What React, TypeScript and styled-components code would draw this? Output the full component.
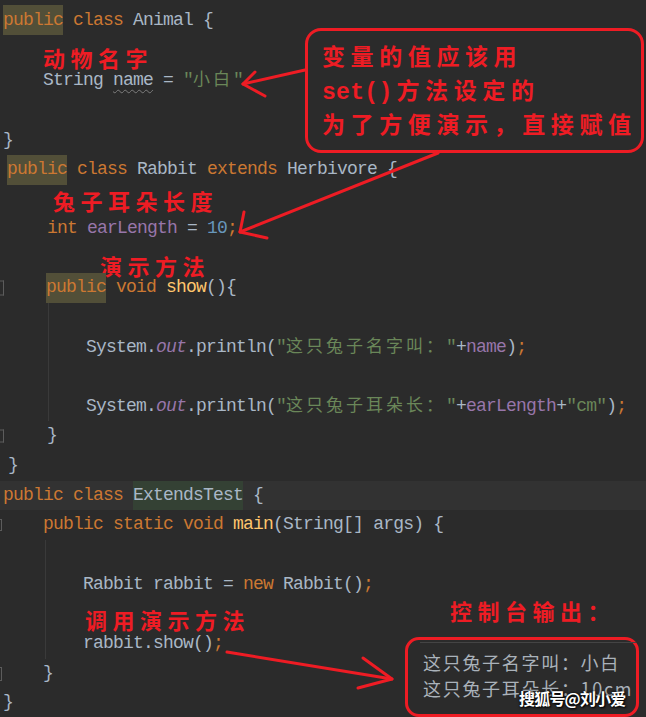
import React from "react";
import styled, { createGlobalStyle, css } from "styled-components";

const Global = createGlobalStyle`
  html, body { margin: 0; padding: 0; background: #2b2b2b; }
  body { width: 646px; height: 717px; overflow: hidden; }
`;

const RED = "#ee1c24";

const Page = styled.div`
  position: relative;
  width: 646px;
  height: 717px;
  overflow: hidden;
  box-sizing: border-box;
  padding-top: 5px;
  background: #2b2b2b;
  color: #a9b7c6;
  font-family: "Liberation Mono", "Noto Sans CJK SC", monospace;
  font-size: 18px;
  letter-spacing: -0.8px;
`;

const Section = styled.div<{ $base: number; $lh: number }>`
  --base: ${(p) => p.$base}px;
  --lh: ${(p) => p.$lh}px;
`;

const Line = styled.div<{ $pad?: number; $current?: boolean }>`
  position: relative;
  height: var(--lh);
  line-height: var(--lh);
  white-space: pre;
  padding-left: calc(var(--base) + ${(p) => p.$pad ?? 0}px);
  ${(p) =>
    p.$current &&
    css`
      background: #323232;
    `}
`;

const Body = styled.div<{ $guide: number }>`
  --base: 37px;
  margin-left: ${(p) => p.$guide}px;
  border-left: 1px solid #3a3a3a;
`;

const Kw = styled.span`
  color: #cc7832;
`;
const Fld = styled.span<{ $italic?: boolean }>`
  color: #9876aa;
  font-style: ${(p) => (p.$italic ? "italic" : "normal")};
`;
const Str = styled.span`
  color: #6a8759;
`;
const Num = styled.span`
  color: #6897bb;
`;
const Fn = styled.span`
  color: #ffc66d;
`;
const Typo = styled.span`
  text-decoration: underline wavy #7d7d7d;
  text-decoration-thickness: 1px;
  text-underline-offset: 4px;
`;
const Hl = styled.span<{ $green?: boolean }>`
  display: inline-block;
  vertical-align: top;
  height: var(--lh);
  line-height: var(--lh);
  background: ${(p) => (p.$green ? "#344134" : "#524f38")};
`;
const Cjk = styled.span`
  font-family: "Noto Sans CJK SC", sans-serif;
  font-size: 17px;
  letter-spacing: 3px;
  line-height: 1;
`;

const Note = styled.span<{ $dy?: number; $ml?: number }>`
  display: inline-block;
  vertical-align: top;
  line-height: var(--lh);
  font-family: "Noto Sans CJK SC", sans-serif;
  font-weight: 700;
  font-size: 22px;
  letter-spacing: 5.5px;
  color: ${RED};
  transform: translateY(${(p) => p.$dy ?? 0}px);
  margin-left: ${(p) => p.$ml ?? 0}px;
`;

const FoldMark = styled.span<{ $h: number; $w: number }>`
  position: absolute;
  left: 0;
  top: 50%;
  width: ${(p) => p.$w}px;
  height: ${(p) => p.$h}px;
  transform: translateY(-50%);
  box-sizing: border-box;
  border: 1px solid #5c5c5c;
  border-left: none;
`;

const Callout = styled.div`
  position: absolute;
  left: 305px;
  top: 28px;
  width: 339px;
  height: 125px;
  box-sizing: border-box;
  border: 3px solid ${RED};
  border-radius: 16px;
  padding: 7px 0 0 14px;
  color: ${RED};
  font-family: "Noto Sans CJK SC", sans-serif;
  font-weight: 700;
  font-size: 23px;
  letter-spacing: 5.6px;
`;

const CalloutLine = styled.div`
  height: 34px;
  line-height: 34px;
  white-space: pre;
`;

const Latin = styled.span`
  font-family: "Liberation Mono", monospace;
  font-weight: 700;
  font-size: 23px;
  letter-spacing: 0.3px;
  margin-right: 4px;
`;

const Console = styled.div`
  position: absolute;
  left: 405px;
  top: 637px;
  width: 234px;
  height: 80px;
  box-sizing: border-box;
  border: 3px solid ${RED};
  border-radius: 14px;
  padding-top: 2px;
`;

const ConsoleRule = styled.div`
  height: 1px;
  margin-left: 12px;
  background: #444444;
`;

const ConsoleText = styled.div`
  padding: 6px 0 0 15px;
  font-family: "Noto Sans CJK SC", sans-serif;
  font-size: 18px;
  letter-spacing: 1.7px;
  color: #aab2ba;
`;

const ConsoleLine = styled.div`
  height: 26px;
  line-height: 26px;
  white-space: nowrap;
`;

const Watermark = styled.div`
  position: absolute;
  left: 519px;
  top: 686px;
  font-family: "Noto Sans CJK SC", sans-serif;
  font-weight: 700;
  font-size: 16px;
  color: #ffffff;
  text-shadow: 1px 1px 2px #000, 0 0 3px #000;
  white-space: nowrap;
`;

const Arrows = styled.svg`
  position: absolute;
  left: 0;
  top: 0;
  pointer-events: none;
`;

export default function App() {
  return (
    <Page>
      <Global />

      <Section $base={3} $lh={30}>
        <Line>
          <Hl>
            <Kw>public</Kw>
          </Hl>{" "}
          <Kw>class</Kw> Animal {"{"}
        </Line>
        <Line $pad={40}>
          <Note $dy={7}>动物名字</Note>
        </Line>
        <Line $pad={40}>
          String <Typo>name</Typo> ={" "}
          <Str>
            "<Cjk>小白</Cjk>"
          </Str>
        </Line>
        <Line />
        <Line>{"}"}</Line>
      </Section>

      <Section $base={7} $lh={29.6}>
        <Line>
          <Hl>
            <Kw>public</Kw>
          </Hl>{" "}
          <Kw>class</Kw> Rabbit <Kw>extends</Kw> Herbivore {"{"}
        </Line>
        <Line $pad={46}>
          <Note $dy={1}>兔子耳朵长度</Note>
        </Line>
        <Line $pad={40}>
          <Kw>int</Kw> <Fld>earLength</Fld> = <Num>10</Num>
          <Kw>;</Kw>
        </Line>
        <Line $pad={93}>
          <Note $dy={7}>演示方法</Note>
        </Line>
        <Line $pad={39}>
          <FoldMark $w={4} $h={15} />
          <Hl>
            <Kw>public</Kw>
          </Hl>{" "}
          <Kw>void</Kw> <Fn>show</Fn>(){"{"}
        </Line>
        <Body $guide={48}>
          <Line />
          <Line>
            System.<Fld $italic>out</Fld>.println(
            <Str>
              "<Cjk>这只兔子名字叫：</Cjk>"
            </Str>
            +<Fld>name</Fld>)<Kw>;</Kw>
          </Line>
          <Line />
          <Line>
            System.<Fld $italic>out</Fld>.println(
            <Str>
              "<Cjk>这只兔子耳朵长：</Cjk>"
            </Str>
            +<Fld>earLength</Fld>+<Str>"cm"</Str>)<Kw>;</Kw>
          </Line>
        </Body>
        <Line $pad={40}>
          <FoldMark $w={4} $h={13} />
          {"}"}
        </Line>
        <Line $pad={1}>{"}"}</Line>
      </Section>

      <Section $base={3} $lh={29.7}>
        <Line $current>
          <Kw>public</Kw> <Kw>class</Kw> <Hl $green>ExtendsTest</Hl> {"{"}
        </Line>
        <Line $pad={40}>
          <FoldMark $w={2} $h={12} />
          <Kw>public</Kw> <Kw>static</Kw> <Kw>void</Kw> <Fn>main</Fn>(String[]
          args) {"{"}
        </Line>
        <Body $guide={45}>
          <Line />
          <Line>
            Rabbit rabbit = <Kw>new</Kw> Rabbit()<Kw>;</Kw>
          </Line>
          <Line>
            <Note $dy={6} $ml={2}>
              调用演示方法
            </Note>
            <Note $dy={-3} $ml={200}>
              控制台输出：
            </Note>
          </Line>
          <Line>
            rabbit.show()<Kw>;</Kw>
          </Line>
        </Body>
        <Line $pad={40}>
          <FoldMark $w={2} $h={14} />
          {"}"}
        </Line>
        <Line>{"}"}</Line>
      </Section>

      <Callout>
        <CalloutLine>变量的值应该用</CalloutLine>
        <CalloutLine>
          <Latin>set()</Latin>方法设定的
        </CalloutLine>
        <CalloutLine>为了方便演示，直接赋值</CalloutLine>
      </Callout>

      <Console>
        <ConsoleRule />
        <ConsoleText>
          <ConsoleLine>这只兔子名字叫：小白</ConsoleLine>
          <ConsoleLine>这只兔子耳朵长：10cm</ConsoleLine>
        </ConsoleText>
      </Console>

      <Watermark>搜狐号@刘小爱</Watermark>

      <Arrows width={646} height={717} viewBox="0 0 646 717">
        <g
          stroke={RED}
          strokeWidth={3}
          fill="none"
          strokeLinecap="round"
          strokeLinejoin="round"
        >
          <polyline points="305,70 243,84" />
          <polyline points="255,72 243,84 265,96" />
          <polyline points="438,153 240,232" />
          <polyline points="244,212 240,232 267,238" />
          <polyline points="227,652 392,679" />
          <polyline points="363,658 392,679 358,688" />
        </g>
      </Arrows>
    </Page>
  );
}
